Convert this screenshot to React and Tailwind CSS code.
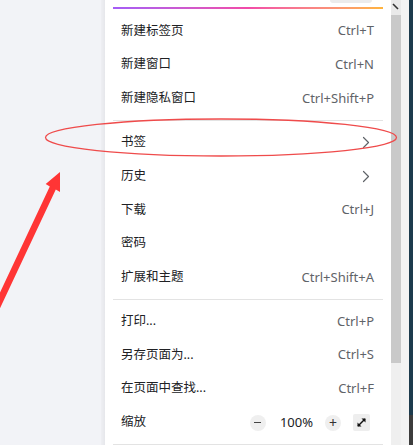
import React from "react";

const Chevron = () => (
  <svg width="8" height="13" viewBox="0 0 8 13" fill="none">
    <path d="M1.5 1.5 L6.5 6.5 L1.5 11.5" stroke="#5f6368" strokeWidth="1.2" strokeLinecap="round" strokeLinejoin="round" />
  </svg>
);

function Row({ label, shortcut, chevron }) {
  return (
    <div className="h-[33.8px] flex items-center justify-between pl-2 pr-[9px]">
      <span className="text-[12.5px] text-[#202124]">{label}</span>
      {shortcut && <span className="text-[13px] text-[#5f6368]">{shortcut}</span>}
      {chevron && <span className="mr-[4px] flex items-center"><Chevron /></span>}
    </div>
  );
}

const Sep = () => (
  <div className="h-[10px] flex flex-col justify-center">
    <div className="h-px bg-[#e3e3e3]" />
  </div>
);

export default function App() {
  return (
    <div
      className="relative w-[413px] h-[445px] overflow-hidden flex bg-[#f2f3f7]"
      style={{ fontFamily: '"Noto Sans", "Noto Sans CJK SC", sans-serif' }}
    >
      <div className="w-[101px] shrink-0 bg-[#f2f3f7]" />
      <div className="w-[4px] shrink-0 bg-gradient-to-r from-[#eeeff3] to-[#e6e7eb]" />
      <div className="relative w-[286px] shrink-0 bg-white px-2 pt-[7px]">
        <div className="absolute top-0 left-[225px] w-[42px] h-[3px] rounded-b bg-[#ececec]" />
        <div className="h-[2px] bg-gradient-to-r from-[#a45cf7] via-[#f24aa8] to-[#ffb43c]" />
        <div className="h-[5px]" />
        <Row label="新建标签页" shortcut="Ctrl+T" />
        <Row label="新建窗口" shortcut="Ctrl+N" />
        <Row label="新建隐私窗口" shortcut="Ctrl+Shift+P" />
        <Sep />
        <Row label="书签" chevron />
        <Row label="历史" chevron />
        <Row label="下载" shortcut="Ctrl+J" />
        <Row label="密码" />
        <Row label="扩展和主题" shortcut="Ctrl+Shift+A" />
        <Sep />
        <Row label="打印..." shortcut="Ctrl+P" />
        <Row label="另存页面为..." shortcut="Ctrl+S" />
        <Row label="在页面中查找..." shortcut="Ctrl+F" />
        <div className="h-[33.8px] flex items-center justify-between pl-2 pr-[13px]">
          <span className="text-[12.5px] text-[#202124]">缩放</span>
          <div className="flex items-center">
            <span className="w-[16px] h-[16px] rounded-full bg-[#efefef] flex items-center justify-center">
              <span className="w-[7px] h-[1.5px] bg-[#444]" />
            </span>
            <span className="ml-[14px] mr-[12px] text-[13px] text-[#202124]">100%</span>
            <span className="w-[16px] h-[16px] rounded-full bg-[#efefef] flex items-center justify-center text-[14px] leading-none text-[#333]">+</span>
            <span className="ml-[12px] w-[17px] h-[17px] rounded-[2px] bg-[#eeeeee] flex items-center justify-center">
              <svg width="11" height="11" viewBox="0 0 11 11" fill="none">
                <path d="M2 9 L9 2" stroke="#111" strokeWidth="1.5" />
                <path d="M5.5 1.5 H9.5 V5.5 Z" fill="#111" />
                <path d="M1.5 5.5 V9.5 H5.5 Z" fill="#111" />
              </svg>
            </span>
          </div>
        </div>
        <Sep />
      </div>
      <div className="w-[10px] shrink-0 flex flex-col bg-[#f1f1f1]">
        <div className="h-[15px] bg-[#e9e9e9] relative">
          <svg className="absolute left-[1px] top-[3px]" width="7" height="7" viewBox="0 0 7 7">
            <path d="M1 1 L6 6" stroke="#333" strokeWidth="1.6" />
          </svg>
        </div>
        <div className="h-[348px] bg-[#c9c9c9]" />
        <div className="flex-1 bg-[#efefef]" />
      </div>
      <div className="w-[8px] shrink-0 bg-[#f3f3f3]" />
      <div className="flex-1 flex flex-col">
        <div className="flex-1 bg-[#1d3b4d]" />
        <div className="h-[30px] bg-[#3c3c3c]" />
      </div>

      <svg className="absolute inset-0 pointer-events-none" width="413" height="445" viewBox="0 0 413 445">
        <ellipse cx="221" cy="137.5" rx="175.5" ry="18.5" fill="none" stroke="#ef4b4b" strokeWidth="1.3" />
        <polygon
          points="60,172 60,192 55.8,189.4 -2,312.4 -8,309.6 49.8,186.6 45.7,184"
          fill="#ff3535"
        />
      </svg>
    </div>
  );
}
